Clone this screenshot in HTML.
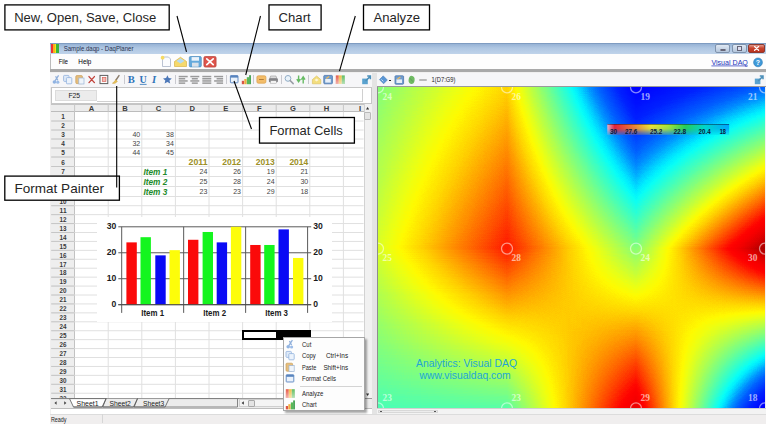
<!DOCTYPE html><html><head><meta charset="utf-8"><title>DaqPlaner</title><style>
html,body{margin:0;padding:0;background:#fff;}
body{width:772px;height:428px;position:relative;overflow:hidden;font-family:"Liberation Sans",sans-serif;color:#222;}
div,svg{position:absolute;box-sizing:border-box;}
svg{left:0;top:0;overflow:visible;}
</style></head><body>
<div style="left:50.30px;top:43.00px;width:715.30px;height:381.00px;background:#f0efef;"></div>
<div style="left:50.30px;top:43.00px;width:715.30px;height:11.40px;background:linear-gradient(#6f8db5 0%,#98b4d6 12%,#aec6e2 45%,#bfd3ea 100%);"></div>
<div style="left:50.80px;top:43.80px;width:8.00px;height:8.80px;background:linear-gradient(90deg,#e33 0 28%,#f3b21a 28% 52%,#f3e51a 52% 66%,#3bb33b 66% 100%);"></div>
<div style="left:714.60px;top:44.20px;width:15.60px;height:8.40px;background:linear-gradient(#dfe8f3,#b4c6dc);border:1px solid #7f93ad;border-radius:2px;"></div>
<div style="left:719.50px;top:48.80px;width:6.00px;height:2.40px;border:1px solid #667;border-radius:1px;background:#eef;"></div>
<div style="left:732.00px;top:44.20px;width:15.40px;height:8.40px;background:linear-gradient(#dfe8f3,#b4c6dc);border:1px solid #7f93ad;border-radius:2px;"></div>
<div style="left:737.00px;top:46.00px;width:5.00px;height:4.50px;border:1px solid #667;background:#dde;"></div>
<div style="left:748.40px;top:44.20px;width:16.80px;height:8.40px;background:linear-gradient(#e29a8c,#c9442e 45%,#b8321e);border:1px solid #8c3a30;border-radius:2px;"></div>
<div style="left:50.30px;top:54.40px;width:715.30px;height:14.80px;background:#fdfdfd;border-left:1px solid #bbb;"></div>
<div style="left:50.30px;top:68.90px;width:715.30px;height:3.30px;background:#a9a9a9;"></div>
<div style="left:50.30px;top:72.60px;width:321.90px;height:14.60px;background:#f6f6f8;"></div>
<div style="left:377.00px;top:72.60px;width:388.60px;height:14.20px;background:#f6f6f8;"></div>
<div style="left:372.20px;top:72.60px;width:4.80px;height:341.00px;background:#e4e4e4;"></div>
<div style="left:123.50px;top:75.00px;width:1.00px;height:9.00px;background:#c9c9cf;"></div>
<div style="left:175.00px;top:75.00px;width:1.00px;height:9.00px;background:#c9c9cf;"></div>
<div style="left:226.00px;top:75.00px;width:1.00px;height:9.00px;background:#c9c9cf;"></div>
<div style="left:253.00px;top:75.00px;width:1.00px;height:9.00px;background:#c9c9cf;"></div>
<div style="left:281.00px;top:75.00px;width:1.00px;height:9.00px;background:#c9c9cf;"></div>
<div style="left:308.20px;top:75.00px;width:1.00px;height:9.00px;background:#c9c9cf;"></div>
<div style="left:389.40px;top:79.80px;width:1.60px;height:1.60px;background:#222;"></div>
<div style="left:419.00px;top:79.20px;width:7.60px;height:2.00px;background:#b9b9b9;border-radius:1px;"></div>
<svg width="772" height="428" viewBox="0 0 772 428"><text x="63.70" y="51.00" font-family="Liberation Sans, sans-serif" font-size="7.3" textLength="69.80" lengthAdjust="spacingAndGlyphs" fill="#2a3350">Sample.daqp - DaqPlaner</text><path d="M754.6 46.6l4 3.6M758.6 46.6l-4 3.6" stroke="#fff" stroke-width="1.3" stroke-linecap="round"/><text x="58.70" y="64.10" font-family="Liberation Sans, sans-serif" font-size="7.3" textLength="9.30" lengthAdjust="spacingAndGlyphs" fill="#000">File</text><text x="78.30" y="64.10" font-family="Liberation Sans, sans-serif" font-size="7.3" textLength="13.10" lengthAdjust="spacingAndGlyphs" fill="#000">Help</text><g transform="translate(160.0 55.5)" opacity=".85"><path d="M2.5 1.5h6l2 2v7.5h-8z" fill="#fbfcff" stroke="#9aa7bd" stroke-width=".8"/><circle cx="2.6" cy="2.2" r="1.9" fill="#f6d648"/><path d="M14.5 6l6-4.2 6 4.2v5h-12z" fill="#f5d352" stroke="#d1a72a" stroke-width=".7"/><path d="M16.5 5.5l4-2.8 4 2.8-4 2.6z" fill="#a9d6f2"/><rect x="29.3" y="1" width="12" height="10.4" rx="1.2" fill="#4a9bd6" stroke="#2f79b4" stroke-width=".7"/><rect x="31.6" y="1.6" width="7.4" height="3.6" fill="#e8f2fb"/><rect x="32" y="7.2" width="6.6" height="4" fill="#d5dde6"/><rect x="43.9" y="1" width="12.2" height="10.6" rx="1.4" fill="#d9372c" stroke="#a8231b" stroke-width=".7"/><path d="M46.8 3.4l6.4 5.8M53.2 3.4l-6.4 5.8" stroke="#fff" stroke-width="1.7" stroke-linecap="round"/></g><text x="711.40" y="64.80" font-family="Liberation Sans, sans-serif" font-size="7.5" textLength="36.50" lengthAdjust="spacingAndGlyphs" fill="#2233bb">Visual DAQ</text><path d="M711.4 65.9H747.9" stroke="#2233bb" stroke-width=".7"/><circle cx="758" cy="62.4" r="4.4" fill="#3f9ad9" stroke="#2a78b5" stroke-width=".6"/><text x="758.00" y="65.00" font-family="Liberation Sans, sans-serif" font-size="7" font-weight="bold" text-anchor="middle" fill="#fff">?</text><defs><linearGradient id="ai" x1="0" y1="0" x2="0" y2="1"><stop offset="0" stop-opacity="0" stop-color="#fff"/><stop offset="1" stop-opacity=".55" stop-color="#fff"/></linearGradient></defs><g transform="translate(51.6 74.6)" opacity=".85"><path d="M7 .8L3.4 6.2M4 1.6l2.2 4" stroke="#7ea3d6" stroke-width="1.3" fill="none"/><circle cx="2.8" cy="7.4" r="1.8" fill="#7fa8de"/><circle cx="6.2" cy="7.6" r="1.6" fill="#8db2e4"/></g><g transform="translate(63.0 74.6)" opacity=".85"><rect x=".6" y=".8" width="5.4" height="6" rx=".8" fill="#dbe8f8" stroke="#7fa5d8" stroke-width=".8"/><rect x="3.4" y="3" width="5.4" height="6.2" rx=".8" fill="#eaf2fc" stroke="#7fa5d8" stroke-width=".8"/></g><g transform="translate(75.2 74.6)" opacity=".85"><rect x=".6" y="1" width="6.6" height="8" rx="1" fill="#e3b468" stroke="#c08e3e" stroke-width=".7"/><rect x="3.6" y="3.4" width="5.2" height="6" fill="#eef4fb" stroke="#8aa9d0" stroke-width=".7"/></g><g transform="translate(87.2 74.6)" opacity=".85"><path d="M1.8 2l5.4 6M7.2 2L1.8 8" stroke="#b9261c" stroke-width="1.4" stroke-linecap="round"/></g><g transform="translate(99.3 74.6)" opacity=".85"><rect x=".7" y=".8" width="7.8" height="8.2" fill="#fff" stroke="#444" stroke-width="1"/><rect x="3" y="3" width="3.6" height="3.8" fill="#f3b0a8" stroke="#d4483c" stroke-width=".7"/></g><g transform="translate(111.4 74.6)" opacity=".85"><path d="M7.6 1L4.6 5.4" stroke="#7a6a56" stroke-width="1.5" stroke-linecap="round"/><path d="M1 8.6c1.5-.4 2.2-2.6 3.4-3.4l1.6 1.4C5.2 8 3.4 9.4 1 8.6z" fill="#e6b93c" stroke="#c0922a" stroke-width=".5"/></g><text x="127.80" y="83.40" font-family="Liberation Serif, serif" font-size="10.6" font-weight="bold" fill="#2f74b8">B</text><text x="139.60" y="83.20" font-family="Liberation Serif, serif" font-size="10" font-weight="bold" fill="#2f74b8">U</text><path d="M139.8 84.4H146.6" stroke="#2f74b8" stroke-width=".8"/><text x="152.00" y="83.40" font-family="Liberation Serif, serif" font-size="10.6" font-weight="bold" font-style="italic" fill="#2f74b8">I</text><g transform="translate(162.4 74.6)" opacity=".85"><path d="M5 .6l1.3 2.9 3.1.3-2.3 2.1.7 3.1L5 7.4 2.2 9l.7-3.1L.6 3.8l3.1-.3z" fill="#2f62ad"/></g><g transform="translate(178.2 74.6)" opacity=".85"><rect x="0.5" y="1.2" width="9.0" height="1.5" fill="#8b8b8b"/><rect x="0.5" y="3.4000000000000004" width="6.5" height="1.5" fill="#8b8b8b"/><rect x="0.5" y="5.6000000000000005" width="9.0" height="1.5" fill="#8b8b8b"/><rect x="0.5" y="7.800000000000001" width="6.5" height="1.5" fill="#8b8b8b"/></g><g transform="translate(189.8 74.6)" opacity=".85"><rect x="0.5" y="1.2" width="9.0" height="1.5" fill="#8b8b8b"/><rect x="2" y="3.4000000000000004" width="6" height="1.5" fill="#8b8b8b"/><rect x="0.5" y="5.6000000000000005" width="9.0" height="1.5" fill="#8b8b8b"/><rect x="2" y="7.800000000000001" width="6" height="1.5" fill="#8b8b8b"/></g><g transform="translate(201.8 74.6)" opacity=".85"><rect x="0.5" y="1.2" width="9.0" height="1.5" fill="#8b8b8b"/><rect x="0.5" y="3.4000000000000004" width="9.0" height="1.5" fill="#8b8b8b"/><rect x="0.5" y="5.6000000000000005" width="9.0" height="1.5" fill="#8b8b8b"/><rect x="0.5" y="7.800000000000001" width="9.0" height="1.5" fill="#8b8b8b"/></g><g transform="translate(213.6 74.6)" opacity=".85"><rect x="0.5" y="1.2" width="9.0" height="1.5" fill="#8b8b8b"/><rect x="3" y="3.4000000000000004" width="6.5" height="1.5" fill="#8b8b8b"/><rect x="0.5" y="5.6000000000000005" width="9.0" height="1.5" fill="#8b8b8b"/><rect x="3" y="7.800000000000001" width="6.5" height="1.5" fill="#8b8b8b"/></g><g transform="translate(229.8 74.6)" opacity=".85"><rect x=".6" y="1" width="7.6" height="7.2" rx=".6" fill="#e9f1fb" stroke="#3c6fb4" stroke-width=".9"/><rect x=".6" y="1" width="7.6" height="2" fill="#3c6fb4"/></g><g transform="translate(241.4 74.6)" opacity=".85"><rect x=".4" y="6.2" width="2.3" height="3.4" fill="#d33a2a"/><rect x="2.9" y="4.4" width="2.3" height="5.2" fill="#f0a020"/><rect x="5.4" y="2.6" width="2.3" height="7" fill="#3cae3c"/><rect x="7.7" y=".6" width="1.9" height="9" fill="#2f9a3f"/></g><g transform="translate(256.4 74.6)" opacity=".85"><rect x=".5" y="1.2" width="9" height="7.4" rx="1.4" fill="#f3b452" stroke="#d68f2a" stroke-width=".7"/><rect x="2.6" y="4.4" width="4.8" height="1" fill="#a86a18"/></g><g transform="translate(268.4 74.6)" opacity=".85"><path d="M2.2 1.4h5.4l.8 2.4H1.4z" fill="#dcdcdc" stroke="#777" stroke-width=".5"/><rect x=".5" y="3.6" width="9" height="4" rx="1" fill="#6f6f74"/><rect x="2.2" y="6.2" width="5.6" height="2.6" fill="#f2f2f2" stroke="#888" stroke-width=".4"/></g><g transform="translate(284.2 74.6)" opacity=".85"><circle cx="3.8" cy="3.8" r="2.9" fill="#e8f3fb" stroke="#7f9fbd" stroke-width="1"/><path d="M6 6l3 3" stroke="#8a8f98" stroke-width="1.5" stroke-linecap="round"/></g><g transform="translate(296.0 74.6)" opacity=".85"><path d="M2.6 1v5.2M.8 4.6l1.8 2.6 1.8-2.6M7.2 9V3.4M5.4 5l1.8-2.8L9 5" stroke="#4db04a" stroke-width="1.4" fill="none"/></g><g transform="translate(311.6 74.6)" opacity=".85"><path d="M.8 5l4.2-3.6L9.2 5v4.2H.8z" fill="#f3da6a" stroke="#d4b23a" stroke-width=".6"/><path d="M3 5.4l2-1.6 2 1.6-2 1.6z" fill="#fff7d0"/></g><g transform="translate(323.2 74.6)" opacity=".85"><rect x=".6" y=".8" width="8.6" height="8.4" rx=".8" fill="#5a8ec8" stroke="#2f5f9e" stroke-width=".8"/><rect x="2" y="4.4" width="5.6" height="3.6" fill="#e6eef8"/><path d="M3 4l3-2" stroke="#f0b040" stroke-width="1.2"/></g><g transform="translate(335.4 74.6)" opacity=".85"><rect x=".4" y=".8" width="3" height="8.6" fill="#e4402c"/><rect x="3.4" y=".8" width="3" height="8.6" fill="#f0b428"/><rect x="6.4" y=".8" width="3" height="8.6" fill="#49b449"/><rect x=".4" y=".8" width="9" height="8.6" fill="url(#ai)"/></g><g transform="translate(361.6 75.0)" opacity=".85"><rect x=".6" y="3.6" width="5.6" height="5.6" fill="#3f94c8"/><path d="M4 6l4.6-4.6M5.6 1h3.2v3.2" stroke="#2f7fb0" stroke-width="1.5" fill="none"/></g><g transform="translate(754.2 75.0)" opacity=".85"><rect x=".6" y="3.6" width="5.6" height="5.6" fill="#3f94c8"/><path d="M4 6l4.6-4.6M5.6 1h3.2v3.2" stroke="#2f7fb0" stroke-width="1.5" fill="none"/></g><g transform="translate(378.8 75.0)" opacity=".85"><path d="M.6 4.6L4.4.8l4.2 4.2-3.8 3.8z" fill="#3f86d0" stroke="#2b66a8" stroke-width=".5"/><path d="M2.6 4.4l2 2" stroke="#cfe3f7" stroke-width=".9"/></g><g transform="translate(394.4 75.0)" opacity=".85"><rect x=".6" y=".8" width="8.6" height="8.4" rx=".8" fill="#5a8ec8" stroke="#2f5f9e" stroke-width=".8"/><rect x="2" y="4.4" width="5.6" height="3.6" fill="#e6eef8"/><path d="M3 4l3-2" stroke="#f0b040" stroke-width="1.2"/></g><g transform="translate(407.4 75.0)" opacity=".85"><path d="M4 .8c2.6 0 3.6 2.2 3.2 4.6C6.9 7.8 5.6 9.2 3.8 9 1.9 8.8.8 7 1.2 4.8 1.6 2.4 2.6.8 4 .8z" fill="#58b04a"/><path d="M2.6 3.2l2.8 3.4" stroke="#3f8a38" stroke-width=".8"/></g><text x="431.60" y="82.40" font-family="Liberation Sans, sans-serif" font-size="6.6" textLength="23.80" lengthAdjust="spacingAndGlyphs" fill="#222">1(D7:G9)</text></svg>
<div style="left:51.20px;top:87.20px;width:321.00px;height:326.40px;background:#fff;"></div>
<div style="left:51.20px;top:87.40px;width:321.00px;height:16.20px;background:#fff;border:1px solid #c6c6c6;"></div>
<div style="left:54.60px;top:89.60px;width:42.00px;height:11.40px;background:#ececec;border:1px solid #dcdcdc;"></div>
<div style="left:97.00px;top:89.00px;width:266.00px;height:12.60px;border-bottom:1px solid #d0d0d0;border-right:1px solid #d0d0d0;"></div>
<div style="left:51.20px;top:103.70px;width:312.40px;height:8.30px;background:#ececec;border-top:1px solid #c4c4c4;border-bottom:1px solid #bcbcbc;"></div>
<div style="left:51.20px;top:112.00px;width:23.40px;height:286.20px;background:#eeeeee;border-right:1px solid #c2c2c2;"></div>
<div style="left:363.60px;top:103.70px;width:8.60px;height:294.50px;background:#f1f1f1;border-left:1px solid #d2d2d2;"></div>
<div style="left:364.40px;top:112.40px;width:7.00px;height:8.00px;background:#e4e4e4;border:1px solid #b9b9b9;border-radius:1px;"></div>
<svg width="772" height="428" viewBox="0 0 772 428"><text x="68.40" y="98.20" font-family="Liberation Sans, sans-serif" font-size="7.5" textLength="11.80" lengthAdjust="spacingAndGlyphs" fill="#222">F25</text><path d="M51.2 121.00H363.6M51.2 130.00H363.6M51.2 139.00H363.6M51.2 148.00H363.6M51.2 157.00H363.6M51.2 166.50H363.6M51.2 176.50H363.6M51.2 186.50H363.6M51.2 196.50H363.6M51.2 205.70H363.6M51.2 214.63H363.6M51.2 223.56H363.6M51.2 232.49H363.6M51.2 241.42H363.6M51.2 250.35H363.6M51.2 259.28H363.6M51.2 268.21H363.6M51.2 277.14H363.6M51.2 286.07H363.6M51.2 295.00H363.6M51.2 303.93H363.6M51.2 312.86H363.6M51.2 321.79H363.6M51.2 330.72H363.6M51.2 339.65H363.6M51.2 348.58H363.6M51.2 357.51H363.6M51.2 366.44H363.6M51.2 375.37H363.6M51.2 384.30H363.6M51.2 393.23H363.6M108.20 112.0V398.2M141.80 112.0V398.2M175.40 112.0V398.2M209.00 112.0V398.2M242.60 112.0V398.2M276.20 112.0V398.2M309.80 112.0V398.2M343.40 112.0V398.2" stroke="#e0e0e0" stroke-width="1" fill="none"/><path d="M74.60 103.7V112.0M108.20 103.7V112.0M141.80 103.7V112.0M175.40 103.7V112.0M209.00 103.7V112.0M242.60 103.7V112.0M276.20 103.7V112.0M309.80 103.7V112.0M343.40 103.7V112.0M51.2 121.00H74.6M51.2 130.00H74.6M51.2 139.00H74.6M51.2 148.00H74.6M51.2 157.00H74.6M51.2 166.50H74.6M51.2 176.50H74.6M51.2 186.50H74.6M51.2 196.50H74.6M51.2 205.70H74.6M51.2 214.63H74.6M51.2 223.56H74.6M51.2 232.49H74.6M51.2 241.42H74.6M51.2 250.35H74.6M51.2 259.28H74.6M51.2 268.21H74.6M51.2 277.14H74.6M51.2 286.07H74.6M51.2 295.00H74.6M51.2 303.93H74.6M51.2 312.86H74.6M51.2 321.79H74.6M51.2 330.72H74.6M51.2 339.65H74.6M51.2 348.58H74.6M51.2 357.51H74.6M51.2 366.44H74.6M51.2 375.37H74.6M51.2 384.30H74.6M51.2 393.23H74.6" stroke="#c6c6c6" stroke-width="1" fill="none"/><text x="91.40" y="110.60" font-family="Liberation Sans, sans-serif" font-size="7.6" font-weight="bold" text-anchor="middle" fill="#3c3c3c">A</text><text x="125.00" y="110.60" font-family="Liberation Sans, sans-serif" font-size="7.6" font-weight="bold" text-anchor="middle" fill="#3c3c3c">B</text><text x="158.60" y="110.60" font-family="Liberation Sans, sans-serif" font-size="7.6" font-weight="bold" text-anchor="middle" fill="#3c3c3c">C</text><text x="192.20" y="110.60" font-family="Liberation Sans, sans-serif" font-size="7.6" font-weight="bold" text-anchor="middle" fill="#3c3c3c">D</text><text x="225.80" y="110.60" font-family="Liberation Sans, sans-serif" font-size="7.6" font-weight="bold" text-anchor="middle" fill="#3c3c3c">E</text><text x="259.40" y="110.60" font-family="Liberation Sans, sans-serif" font-size="7.6" font-weight="bold" text-anchor="middle" fill="#3c3c3c">F</text><text x="293.00" y="110.60" font-family="Liberation Sans, sans-serif" font-size="7.6" font-weight="bold" text-anchor="middle" fill="#3c3c3c">G</text><text x="326.60" y="110.60" font-family="Liberation Sans, sans-serif" font-size="7.6" font-weight="bold" text-anchor="middle" fill="#3c3c3c">H</text><text x="360.00" y="110.60" font-family="Liberation Sans, sans-serif" font-size="7.6" font-weight="bold" text-anchor="middle" fill="#3c3c3c">I</text><text x="61.30" y="119.30" font-family="Liberation Sans, sans-serif" font-size="7.6" font-weight="bold" textLength="3.60" lengthAdjust="spacingAndGlyphs" fill="#3a3a3a">1</text><text x="61.30" y="128.30" font-family="Liberation Sans, sans-serif" font-size="7.6" font-weight="bold" textLength="3.60" lengthAdjust="spacingAndGlyphs" fill="#3a3a3a">2</text><text x="61.30" y="137.30" font-family="Liberation Sans, sans-serif" font-size="7.6" font-weight="bold" textLength="3.60" lengthAdjust="spacingAndGlyphs" fill="#3a3a3a">3</text><text x="61.30" y="146.30" font-family="Liberation Sans, sans-serif" font-size="7.6" font-weight="bold" textLength="3.60" lengthAdjust="spacingAndGlyphs" fill="#3a3a3a">4</text><text x="61.30" y="155.30" font-family="Liberation Sans, sans-serif" font-size="7.6" font-weight="bold" textLength="3.60" lengthAdjust="spacingAndGlyphs" fill="#3a3a3a">5</text><text x="61.30" y="164.55" font-family="Liberation Sans, sans-serif" font-size="7.6" font-weight="bold" textLength="3.60" lengthAdjust="spacingAndGlyphs" fill="#3a3a3a">6</text><text x="61.30" y="174.30" font-family="Liberation Sans, sans-serif" font-size="7.6" font-weight="bold" textLength="3.60" lengthAdjust="spacingAndGlyphs" fill="#3a3a3a">7</text><text x="61.30" y="184.30" font-family="Liberation Sans, sans-serif" font-size="7.6" font-weight="bold" textLength="3.60" lengthAdjust="spacingAndGlyphs" fill="#3a3a3a">8</text><text x="61.30" y="194.30" font-family="Liberation Sans, sans-serif" font-size="7.6" font-weight="bold" textLength="3.60" lengthAdjust="spacingAndGlyphs" fill="#3a3a3a">9</text><text x="59.60" y="203.90" font-family="Liberation Sans, sans-serif" font-size="7.6" font-weight="bold" textLength="7.00" lengthAdjust="spacingAndGlyphs" fill="#3a3a3a">10</text><text x="59.60" y="212.97" font-family="Liberation Sans, sans-serif" font-size="7.6" font-weight="bold" textLength="7.00" lengthAdjust="spacingAndGlyphs" fill="#3a3a3a">11</text><text x="59.60" y="221.90" font-family="Liberation Sans, sans-serif" font-size="7.6" font-weight="bold" textLength="7.00" lengthAdjust="spacingAndGlyphs" fill="#3a3a3a">12</text><text x="59.60" y="230.82" font-family="Liberation Sans, sans-serif" font-size="7.6" font-weight="bold" textLength="7.00" lengthAdjust="spacingAndGlyphs" fill="#3a3a3a">13</text><text x="59.60" y="239.75" font-family="Liberation Sans, sans-serif" font-size="7.6" font-weight="bold" textLength="7.00" lengthAdjust="spacingAndGlyphs" fill="#3a3a3a">14</text><text x="59.60" y="248.69" font-family="Liberation Sans, sans-serif" font-size="7.6" font-weight="bold" textLength="7.00" lengthAdjust="spacingAndGlyphs" fill="#3a3a3a">15</text><text x="59.60" y="257.62" font-family="Liberation Sans, sans-serif" font-size="7.6" font-weight="bold" textLength="7.00" lengthAdjust="spacingAndGlyphs" fill="#3a3a3a">16</text><text x="59.60" y="266.55" font-family="Liberation Sans, sans-serif" font-size="7.6" font-weight="bold" textLength="7.00" lengthAdjust="spacingAndGlyphs" fill="#3a3a3a">17</text><text x="59.60" y="275.47" font-family="Liberation Sans, sans-serif" font-size="7.6" font-weight="bold" textLength="7.00" lengthAdjust="spacingAndGlyphs" fill="#3a3a3a">18</text><text x="59.60" y="284.41" font-family="Liberation Sans, sans-serif" font-size="7.6" font-weight="bold" textLength="7.00" lengthAdjust="spacingAndGlyphs" fill="#3a3a3a">19</text><text x="59.60" y="293.33" font-family="Liberation Sans, sans-serif" font-size="7.6" font-weight="bold" textLength="7.00" lengthAdjust="spacingAndGlyphs" fill="#3a3a3a">20</text><text x="59.60" y="302.26" font-family="Liberation Sans, sans-serif" font-size="7.6" font-weight="bold" textLength="7.00" lengthAdjust="spacingAndGlyphs" fill="#3a3a3a">21</text><text x="59.60" y="311.19" font-family="Liberation Sans, sans-serif" font-size="7.6" font-weight="bold" textLength="7.00" lengthAdjust="spacingAndGlyphs" fill="#3a3a3a">22</text><text x="59.60" y="320.12" font-family="Liberation Sans, sans-serif" font-size="7.6" font-weight="bold" textLength="7.00" lengthAdjust="spacingAndGlyphs" fill="#3a3a3a">23</text><text x="59.60" y="329.06" font-family="Liberation Sans, sans-serif" font-size="7.6" font-weight="bold" textLength="7.00" lengthAdjust="spacingAndGlyphs" fill="#3a3a3a">24</text><text x="59.60" y="337.98" font-family="Liberation Sans, sans-serif" font-size="7.6" font-weight="bold" textLength="7.00" lengthAdjust="spacingAndGlyphs" fill="#3a3a3a">25</text><text x="59.60" y="346.92" font-family="Liberation Sans, sans-serif" font-size="7.6" font-weight="bold" textLength="7.00" lengthAdjust="spacingAndGlyphs" fill="#3a3a3a">26</text><text x="59.60" y="355.84" font-family="Liberation Sans, sans-serif" font-size="7.6" font-weight="bold" textLength="7.00" lengthAdjust="spacingAndGlyphs" fill="#3a3a3a">27</text><text x="59.60" y="364.78" font-family="Liberation Sans, sans-serif" font-size="7.6" font-weight="bold" textLength="7.00" lengthAdjust="spacingAndGlyphs" fill="#3a3a3a">28</text><text x="59.60" y="373.70" font-family="Liberation Sans, sans-serif" font-size="7.6" font-weight="bold" textLength="7.00" lengthAdjust="spacingAndGlyphs" fill="#3a3a3a">29</text><text x="59.60" y="382.63" font-family="Liberation Sans, sans-serif" font-size="7.6" font-weight="bold" textLength="7.00" lengthAdjust="spacingAndGlyphs" fill="#3a3a3a">30</text><text x="59.60" y="391.56" font-family="Liberation Sans, sans-serif" font-size="7.6" font-weight="bold" textLength="7.00" lengthAdjust="spacingAndGlyphs" fill="#3a3a3a">31</text><text x="59.60" y="400.50" font-family="Liberation Sans, sans-serif" font-size="7.6" font-weight="bold" textLength="7.00" lengthAdjust="spacingAndGlyphs" fill="#3a3a3a">32</text><text x="132.40" y="137.30" font-family="Liberation Sans, sans-serif" font-size="7.7" textLength="7.80" lengthAdjust="spacingAndGlyphs" fill="#454545">40</text><text x="166.00" y="137.30" font-family="Liberation Sans, sans-serif" font-size="7.7" textLength="7.80" lengthAdjust="spacingAndGlyphs" fill="#454545">38</text><text x="132.40" y="146.30" font-family="Liberation Sans, sans-serif" font-size="7.7" textLength="7.80" lengthAdjust="spacingAndGlyphs" fill="#454545">32</text><text x="166.00" y="146.30" font-family="Liberation Sans, sans-serif" font-size="7.7" textLength="7.80" lengthAdjust="spacingAndGlyphs" fill="#454545">34</text><text x="132.40" y="155.30" font-family="Liberation Sans, sans-serif" font-size="7.7" textLength="7.80" lengthAdjust="spacingAndGlyphs" fill="#454545">44</text><text x="166.00" y="155.30" font-family="Liberation Sans, sans-serif" font-size="7.7" textLength="7.80" lengthAdjust="spacingAndGlyphs" fill="#454545">45</text><text x="188.60" y="164.95" font-family="Liberation Sans, sans-serif" font-size="9" font-weight="bold" textLength="18.90" lengthAdjust="spacingAndGlyphs" fill="#9c8f26">2011</text><text x="222.20" y="164.95" font-family="Liberation Sans, sans-serif" font-size="9" font-weight="bold" textLength="18.90" lengthAdjust="spacingAndGlyphs" fill="#9c8f26">2012</text><text x="255.80" y="164.95" font-family="Liberation Sans, sans-serif" font-size="9" font-weight="bold" textLength="18.90" lengthAdjust="spacingAndGlyphs" fill="#9c8f26">2013</text><text x="289.40" y="164.95" font-family="Liberation Sans, sans-serif" font-size="9" font-weight="bold" textLength="18.90" lengthAdjust="spacingAndGlyphs" fill="#9c8f26">2014</text><text x="143.50" y="174.50" font-family="Liberation Sans, sans-serif" font-size="8.4" font-weight="bold" font-style="italic" textLength="23.80" lengthAdjust="spacingAndGlyphs" fill="#1d8a2a">Item 1</text><text x="199.60" y="174.30" font-family="Liberation Sans, sans-serif" font-size="7.7" textLength="7.80" lengthAdjust="spacingAndGlyphs" fill="#454545">24</text><text x="233.20" y="174.30" font-family="Liberation Sans, sans-serif" font-size="7.7" textLength="7.80" lengthAdjust="spacingAndGlyphs" fill="#454545">26</text><text x="266.80" y="174.30" font-family="Liberation Sans, sans-serif" font-size="7.7" textLength="7.80" lengthAdjust="spacingAndGlyphs" fill="#454545">19</text><text x="300.40" y="174.30" font-family="Liberation Sans, sans-serif" font-size="7.7" textLength="7.80" lengthAdjust="spacingAndGlyphs" fill="#454545">21</text><text x="143.50" y="184.50" font-family="Liberation Sans, sans-serif" font-size="8.4" font-weight="bold" font-style="italic" textLength="23.80" lengthAdjust="spacingAndGlyphs" fill="#1d8a2a">Item 2</text><text x="199.60" y="184.30" font-family="Liberation Sans, sans-serif" font-size="7.7" textLength="7.80" lengthAdjust="spacingAndGlyphs" fill="#454545">25</text><text x="233.20" y="184.30" font-family="Liberation Sans, sans-serif" font-size="7.7" textLength="7.80" lengthAdjust="spacingAndGlyphs" fill="#454545">28</text><text x="266.80" y="184.30" font-family="Liberation Sans, sans-serif" font-size="7.7" textLength="7.80" lengthAdjust="spacingAndGlyphs" fill="#454545">24</text><text x="300.40" y="184.30" font-family="Liberation Sans, sans-serif" font-size="7.7" textLength="7.80" lengthAdjust="spacingAndGlyphs" fill="#454545">30</text><text x="143.50" y="194.50" font-family="Liberation Sans, sans-serif" font-size="8.4" font-weight="bold" font-style="italic" textLength="23.80" lengthAdjust="spacingAndGlyphs" fill="#1d8a2a">Item 3</text><text x="199.60" y="194.30" font-family="Liberation Sans, sans-serif" font-size="7.7" textLength="7.80" lengthAdjust="spacingAndGlyphs" fill="#454545">23</text><text x="233.20" y="194.30" font-family="Liberation Sans, sans-serif" font-size="7.7" textLength="7.80" lengthAdjust="spacingAndGlyphs" fill="#454545">23</text><text x="266.80" y="194.30" font-family="Liberation Sans, sans-serif" font-size="7.7" textLength="7.80" lengthAdjust="spacingAndGlyphs" fill="#454545">29</text><text x="300.40" y="194.30" font-family="Liberation Sans, sans-serif" font-size="7.7" textLength="7.80" lengthAdjust="spacingAndGlyphs" fill="#454545">18</text><path d="M366 109.4l1.6-2.4 1.6 2.4zM366 393.6l1.6 2.4 1.6-2.4z" fill="#333"/></svg>
<div style="left:96.80px;top:217.00px;width:235.40px;height:105.00px;background:#fff;"></div>
<svg width="772" height="428" viewBox="0 0 772 428"><path d="M118.3 226.80H311.20000000000005" stroke="#5a5a5a" stroke-width="1"/><path d="M118.3 252.77H311.20000000000005" stroke="#5a5a5a" stroke-width="1"/><path d="M118.3 278.73H311.20000000000005" stroke="#5a5a5a" stroke-width="1"/><path d="M118.3 304.70H311.20000000000005" stroke="#5a5a5a" stroke-width="1"/><path d="M121.70 226.8V312.9" stroke="#5a5a5a" stroke-width="1"/><path d="M183.67 226.8V312.9" stroke="#5a5a5a" stroke-width="1"/><path d="M245.63 226.8V312.9" stroke="#5a5a5a" stroke-width="1"/><path d="M307.60 226.8V312.9" stroke="#5a5a5a" stroke-width="1"/><rect x="126.40" y="242.38" width="10.4" height="62.32" fill="#fb0a0a"/><rect x="140.50" y="237.19" width="10.4" height="67.51" fill="#14f51e"/><rect x="155.30" y="255.36" width="10.4" height="49.34" fill="#0a0af5"/><rect x="169.50" y="250.17" width="10.4" height="54.53" fill="#fdfd0a"/><rect x="188.00" y="239.78" width="10.4" height="64.92" fill="#fb0a0a"/><rect x="202.60" y="231.99" width="10.4" height="72.71" fill="#14f51e"/><rect x="216.70" y="242.38" width="10.4" height="62.32" fill="#0a0af5"/><rect x="230.90" y="226.80" width="10.4" height="77.90" fill="#fdfd0a"/><rect x="250.20" y="244.98" width="10.4" height="59.72" fill="#fb0a0a"/><rect x="264.20" y="244.98" width="10.4" height="59.72" fill="#14f51e"/><rect x="278.50" y="229.40" width="10.4" height="75.30" fill="#0a0af5"/><rect x="293.00" y="257.96" width="10.4" height="46.74" fill="#fdfd0a"/><path d="M118.3 304.7H311.20000000000005" stroke="#4a4a4a" stroke-width="1"/><text x="116.20" y="229.40" font-family="Liberation Sans, sans-serif" font-size="8.6" font-weight="bold" text-anchor="end" fill="#1a1a1a">30</text><text x="313.20" y="229.40" font-family="Liberation Sans, sans-serif" font-size="8.6" font-weight="bold" fill="#1a1a1a">30</text><text x="116.20" y="255.37" font-family="Liberation Sans, sans-serif" font-size="8.6" font-weight="bold" text-anchor="end" fill="#1a1a1a">20</text><text x="313.20" y="255.37" font-family="Liberation Sans, sans-serif" font-size="8.6" font-weight="bold" fill="#1a1a1a">20</text><text x="116.20" y="281.33" font-family="Liberation Sans, sans-serif" font-size="8.6" font-weight="bold" text-anchor="end" fill="#1a1a1a">10</text><text x="313.20" y="281.33" font-family="Liberation Sans, sans-serif" font-size="8.6" font-weight="bold" fill="#1a1a1a">10</text><text x="116.20" y="307.30" font-family="Liberation Sans, sans-serif" font-size="8.6" font-weight="bold" text-anchor="end" fill="#1a1a1a">0</text><text x="313.20" y="307.30" font-family="Liberation Sans, sans-serif" font-size="8.6" font-weight="bold" fill="#1a1a1a">0</text><text x="141.28" y="316.30" font-family="Liberation Sans, sans-serif" font-size="8.4" font-weight="bold" textLength="22.80" lengthAdjust="spacingAndGlyphs" fill="#1a1a1a">Item 1</text><text x="203.25" y="316.30" font-family="Liberation Sans, sans-serif" font-size="8.4" font-weight="bold" textLength="22.80" lengthAdjust="spacingAndGlyphs" fill="#1a1a1a">Item 2</text><text x="265.22" y="316.30" font-family="Liberation Sans, sans-serif" font-size="8.4" font-weight="bold" textLength="22.80" lengthAdjust="spacingAndGlyphs" fill="#1a1a1a">Item 3</text></svg>
<div style="left:241.60px;top:329.80px;width:69.00px;height:10.20px;border:2px solid #000;background:#fff;"></div>
<div style="left:275.90px;top:330.10px;width:34.40px;height:9.70px;background:#000;"></div>
<div style="left:51.20px;top:398.20px;width:321.00px;height:9.60px;background:#ececec;border-top:1px solid #9a9a9a;"></div>
<div style="left:239.00px;top:398.80px;width:124.60px;height:8.60px;background:#f4f4f4;border:1px solid #cfcfcf;"></div>
<div style="left:247.60px;top:399.60px;width:7.60px;height:7.00px;background:#e4e4e4;border:1px solid #a9a9a9;border-radius:1px;"></div>
<div style="left:51.20px;top:407.80px;width:321.00px;height:1.60px;background:#bdbdbd;"></div>
<svg width="772" height="428" viewBox="0 0 772 428"><path d="M56.6 401.2l-2.2 1.8 2.2 1.8zM64.2 401.2l2.2 1.8-2.2 1.8z" fill="#444"/><path d="M69.5 398.6l4 8.4h28.6l4-8.4z" fill="#fff" stroke="#555" stroke-width=".8"/><path d="M106.1 398.6l-3.4 8.4h30.8l4-8.4M137.5 398.6l-3.4 8.4h31l4-8.4" fill="none" stroke="#555" stroke-width=".8"/><path d="M69.5 398.6H51.2M169 398.6H239" stroke="#777" stroke-width=".8"/><path d="M73.5 407H237.5V399" fill="none" stroke="#6a6a6a" stroke-width=".8"/><text x="76.60" y="405.80" font-family="Liberation Sans, sans-serif" font-size="7.5" textLength="21.90" lengthAdjust="spacingAndGlyphs" fill="#222">Sheet1</text><text x="109.40" y="405.80" font-family="Liberation Sans, sans-serif" font-size="7.5" textLength="21.50" lengthAdjust="spacingAndGlyphs" fill="#222">Sheet2</text><text x="143.00" y="405.80" font-family="Liberation Sans, sans-serif" font-size="7.5" textLength="21.20" lengthAdjust="spacingAndGlyphs" fill="#222">Sheet3</text><path d="M243.8 401.2l-2.2 1.8 2.2 1.8z" fill="#333"/></svg>
<svg style="left:378.00px;top:87.00px;overflow:hidden" width="387.00" height="322.00" viewBox="0 0 387.00 322.00"><defs><linearGradient id="r0" gradientUnits="userSpaceOnUse" x1="0" y1="0" x2="387.00" y2="0"><stop offset="0.00000" stop-color="rgb(127.5,127.5,127.5)"/><stop offset="0.33333" stop-color="rgb(170.0,170.0,170.0)"/><stop offset="0.66667" stop-color="rgb(21.2,21.2,21.2)"/><stop offset="1.00000" stop-color="rgb(63.8,63.8,63.8)"/></linearGradient><linearGradient id="r1" gradientUnits="userSpaceOnUse" x1="0" y1="0" x2="387.00" y2="0"><stop offset="0.00000" stop-color="rgb(148.8,148.8,148.8)"/><stop offset="0.33333" stop-color="rgb(212.5,212.5,212.5)"/><stop offset="0.66667" stop-color="rgb(127.5,127.5,127.5)"/><stop offset="1.00000" stop-color="rgb(255.0,255.0,255.0)"/></linearGradient><linearGradient id="r2" gradientUnits="userSpaceOnUse" x1="0" y1="0" x2="387.00" y2="0"><stop offset="0.00000" stop-color="rgb(110.5,110.5,110.5)"/><stop offset="0.33333" stop-color="rgb(110.5,110.5,110.5)"/><stop offset="0.66667" stop-color="rgb(238.0,238.0,238.0)"/><stop offset="1.00000" stop-color="rgb(4.2,4.2,4.2)"/></linearGradient><linearGradient id="v0" gradientUnits="userSpaceOnUse" x1="0" y1="0.00" x2="0" y2="161.40"><stop offset="0" stop-color="#fff" stop-opacity="0"/><stop offset="1" stop-color="#fff" stop-opacity="1"/></linearGradient><mask id="m0" maskUnits="userSpaceOnUse" x="0" y="-2.00" width="387.00" height="165.40"><rect x="0" y="-2.00" width="387.00" height="165.40" fill="url(#v0)"/></mask><linearGradient id="v1" gradientUnits="userSpaceOnUse" x1="0" y1="161.40" x2="0" y2="328.20"><stop offset="0" stop-color="#fff" stop-opacity="0"/><stop offset="1" stop-color="#fff" stop-opacity="1"/></linearGradient><mask id="m1" maskUnits="userSpaceOnUse" x="0" y="159.40" width="387.00" height="170.80"><rect x="0" y="159.40" width="387.00" height="170.80" fill="url(#v1)"/></mask><filter id="jet" filterUnits="userSpaceOnUse" x="0" y="0" width="387.00" height="322.00" color-interpolation-filters="sRGB"><feComponentTransfer><feFuncR type="table" tableValues="0 0 0 0 0 0 0 0 0 0 0 0 0 0 0 0 0 0 0.033 0.115 0.197 0.279 0.361 0.443 0.525 0.607 0.689 0.77 0.852 0.934 1 1 1 1 1 1 1 1 1 1 1 1 0.985 0.951 0.905 0.85 0.786 0.716 0.64"/><feFuncG type="table" tableValues="0 0 0 0 0 0.033 0.065 0.098 0.13 0.193 0.255 0.318 0.38 0.475 0.57 0.695 0.82 0.933 1 1 1 1 1 1 1 1 1 1 1 1 0.985 0.907 0.83 0.74 0.65 0.56 0.47 0.377 0.285 0.193 0.1 0.017 0 0 0 0 0 0 0"/><feFuncB type="table" tableValues="0.74 0.805 0.87 0.935 1 1 1 1 1 1 1 1 1 1 1 1 1 1 0.967 0.885 0.803 0.721 0.639 0.557 0.475 0.393 0.311 0.23 0.148 0.066 0 0 0 0 0 0 0 0 0 0 0 0 0 0 0 0 0 0 0"/></feComponentTransfer></filter><linearGradient id="lg" x1="0" y1="0" x2="1" y2="0"><stop offset="0" stop-color="#f0b4c8"/><stop offset=".06" stop-color="#f01e32"/><stop offset=".2" stop-color="#f57828"/><stop offset=".36" stop-color="#f5eb2d"/><stop offset=".5" stop-color="#aaeb32"/><stop offset=".64" stop-color="#28d250"/><stop offset=".8" stop-color="#00d7c8"/><stop offset="1" stop-color="#00a0ff"/></linearGradient><linearGradient id="lgv" x1="0" y1="0" x2="0" y2="1"><stop offset="0" stop-color="#013" stop-opacity=".55"/><stop offset=".08" stop-color="#013" stop-opacity=".4"/><stop offset=".13" stop-color="#000" stop-opacity="0"/><stop offset="1" stop-color="#fff" stop-opacity="0"/></linearGradient><linearGradient id="lga" x1="0" y1="0" x2="0" y2="1"><stop offset="0" stop-color="#fff" stop-opacity="1"/><stop offset=".4" stop-color="#fff" stop-opacity=".9"/><stop offset="1" stop-color="#fff" stop-opacity=".08"/></linearGradient><mask id="lm" maskUnits="userSpaceOnUse" x="228" y="37" width="126" height="12"><rect x="228" y="37" width="126" height="12" fill="url(#lga)"/></mask></defs><g filter="url(#jet)" shape-rendering="crispEdges"><rect x="0" y="0" width="387.00" height="162" fill="url(#r0)"/><rect x="0" y="0" width="387.00" height="162" fill="url(#r1)" mask="url(#m0)"/><rect x="0" y="162" width="387.00" height="160.00" fill="url(#r1)"/><rect x="0" y="162" width="387.00" height="160.00" fill="url(#r2)" mask="url(#m1)"/></g><g mask="url(#lm)"><rect x="229.30" y="37.00" width="121.80" height="11.00" fill="url(#lg)"/></g><rect x="229.30" y="37.00" width="121.80" height="11.00" fill="url(#lgv)"/><text x="232.00" y="46.70" textLength="7.20" lengthAdjust="spacingAndGlyphs" font-family="Liberation Sans, sans-serif" font-size="6.3" font-weight="bold" fill="#0a1a3a">30</text><text x="247.00" y="46.70" textLength="12.20" lengthAdjust="spacingAndGlyphs" font-family="Liberation Sans, sans-serif" font-size="6.3" font-weight="bold" fill="#0a1a3a">27.6</text><text x="271.90" y="46.70" textLength="12.30" lengthAdjust="spacingAndGlyphs" font-family="Liberation Sans, sans-serif" font-size="6.3" font-weight="bold" fill="#0a1a3a">25.2</text><text x="295.40" y="46.70" textLength="12.70" lengthAdjust="spacingAndGlyphs" font-family="Liberation Sans, sans-serif" font-size="6.3" font-weight="bold" fill="#0a1a3a">22.8</text><text x="320.50" y="46.70" textLength="12.10" lengthAdjust="spacingAndGlyphs" font-family="Liberation Sans, sans-serif" font-size="6.3" font-weight="bold" fill="#0a1a3a">20.4</text><text x="341.70" y="46.70" textLength="6.30" lengthAdjust="spacingAndGlyphs" font-family="Liberation Sans, sans-serif" font-size="6.3" font-weight="bold" fill="#0a1a3a">18</text><circle cx="0.00" cy="0.30" r="5.5" fill="none" stroke="#fff" stroke-opacity=".52" stroke-width="1.25"/><text x="4.60" y="12.80" textLength="9.4" lengthAdjust="spacingAndGlyphs" font-family="Liberation Serif, serif" font-size="10" font-weight="bold" fill="#fff" fill-opacity=".62">24</text><circle cx="129.00" cy="0.30" r="5.5" fill="none" stroke="#fff" stroke-opacity=".52" stroke-width="1.25"/><text x="133.60" y="12.80" textLength="9.4" lengthAdjust="spacingAndGlyphs" font-family="Liberation Serif, serif" font-size="10" font-weight="bold" fill="#fff" fill-opacity=".62">26</text><circle cx="258.00" cy="0.30" r="5.5" fill="none" stroke="#fff" stroke-opacity=".52" stroke-width="1.25"/><text x="262.60" y="12.80" textLength="9.4" lengthAdjust="spacingAndGlyphs" font-family="Liberation Serif, serif" font-size="10" font-weight="bold" fill="#fff" fill-opacity=".62">19</text><circle cx="387.00" cy="0.30" r="5.5" fill="none" stroke="#fff" stroke-opacity=".52" stroke-width="1.25"/><text x="370.00" y="12.80" textLength="9.4" lengthAdjust="spacingAndGlyphs" font-family="Liberation Serif, serif" font-size="10" font-weight="bold" fill="#fff" fill-opacity=".62">21</text><circle cx="0.00" cy="161.60" r="5.5" fill="none" stroke="#fff" stroke-opacity=".52" stroke-width="1.25"/><text x="4.60" y="174.10" textLength="9.4" lengthAdjust="spacingAndGlyphs" font-family="Liberation Serif, serif" font-size="10" font-weight="bold" fill="#fff" fill-opacity=".62">25</text><circle cx="129.00" cy="161.60" r="5.5" fill="none" stroke="#fff" stroke-opacity=".52" stroke-width="1.25"/><text x="133.60" y="174.10" textLength="9.4" lengthAdjust="spacingAndGlyphs" font-family="Liberation Serif, serif" font-size="10" font-weight="bold" fill="#fff" fill-opacity=".62">28</text><circle cx="258.00" cy="161.60" r="5.5" fill="none" stroke="#fff" stroke-opacity=".52" stroke-width="1.25"/><text x="262.60" y="174.10" textLength="9.4" lengthAdjust="spacingAndGlyphs" font-family="Liberation Serif, serif" font-size="10" font-weight="bold" fill="#fff" fill-opacity=".62">24</text><circle cx="387.00" cy="161.60" r="5.5" fill="none" stroke="#fff" stroke-opacity=".52" stroke-width="1.25"/><text x="370.00" y="174.10" textLength="9.4" lengthAdjust="spacingAndGlyphs" font-family="Liberation Serif, serif" font-size="10" font-weight="bold" fill="#fff" fill-opacity=".62">30</text><circle cx="0.00" cy="321.40" r="5.5" fill="none" stroke="#fff" stroke-opacity=".52" stroke-width="1.25"/><text x="4.60" y="314.00" textLength="9.4" lengthAdjust="spacingAndGlyphs" font-family="Liberation Serif, serif" font-size="10" font-weight="bold" fill="#fff" fill-opacity=".62">23</text><circle cx="129.00" cy="321.40" r="5.5" fill="none" stroke="#fff" stroke-opacity=".52" stroke-width="1.25"/><text x="133.60" y="314.00" textLength="9.4" lengthAdjust="spacingAndGlyphs" font-family="Liberation Serif, serif" font-size="10" font-weight="bold" fill="#fff" fill-opacity=".62">23</text><circle cx="258.00" cy="321.40" r="5.5" fill="none" stroke="#fff" stroke-opacity=".52" stroke-width="1.25"/><text x="262.60" y="314.00" textLength="9.4" lengthAdjust="spacingAndGlyphs" font-family="Liberation Serif, serif" font-size="10" font-weight="bold" fill="#fff" fill-opacity=".62">29</text><circle cx="387.00" cy="321.40" r="5.5" fill="none" stroke="#fff" stroke-opacity=".52" stroke-width="1.25"/><text x="370.00" y="314.00" textLength="9.4" lengthAdjust="spacingAndGlyphs" font-family="Liberation Serif, serif" font-size="10" font-weight="bold" fill="#fff" fill-opacity=".62">18</text><text x="38.00" y="280.00" textLength="101" lengthAdjust="spacingAndGlyphs" font-family="Liberation Sans, sans-serif" font-size="10.7" fill="#1ea6d4">Analytics: Visual DAQ</text><text x="41.50" y="292.40" textLength="91.2" lengthAdjust="spacingAndGlyphs" font-family="Liberation Sans, sans-serif" font-size="10.7" fill="#1ea6d4">www.visualdaq.com</text></svg>
<div style="left:376.80px;top:86.60px;width:1.00px;height:322.40px;background:#8e8e8e;"></div>
<div style="left:376.80px;top:86.20px;width:389.00px;height:1.00px;background:#9a9a9a;"></div>
<div style="left:377.00px;top:408.40px;width:388.60px;height:5.20px;background:#f3f3f3;border-top:1px solid #d0d0d0;"></div>
<div style="left:378.00px;top:409.80px;width:60.00px;height:3.00px;background:#ededed;border:1px solid #d8d8d8;"></div>
<div style="left:380.40px;top:410.50px;width:1.50px;height:1.50px;background:#555;"></div>
<div style="left:434.40px;top:410.50px;width:1.50px;height:1.50px;background:#555;"></div>
<div style="left:50.30px;top:413.60px;width:715.30px;height:10.20px;background:#f0eeee;border-top:1px solid #dcdcdc;"></div>
<div style="left:102.00px;top:414.40px;width:1.00px;height:9.00px;background:#d6d6d6;"></div>
<svg width="772" height="428" viewBox="0 0 772 428"><text x="50.90" y="421.80" font-family="Liberation Sans, sans-serif" font-size="7.2" textLength="15.60" lengthAdjust="spacingAndGlyphs" fill="#222">Ready</text></svg>
<div style="left:283.00px;top:337.20px;width:82.00px;height:73.70px;background:#fdfdfd;border:1px solid #a6a6a6;box-shadow:1.5px 1.5px 2px rgba(0,0,0,.35);"></div>
<div style="left:300.00px;top:386.00px;width:62.00px;height:1.00px;background:#d4d4d4;"></div>
<svg width="772" height="428" viewBox="0 0 772 428"><text x="302.00" y="346.60" font-family="Liberation Sans, sans-serif" font-size="7.2" textLength="9.30" lengthAdjust="spacingAndGlyphs" fill="#222">Cut</text><text x="302.00" y="357.90" font-family="Liberation Sans, sans-serif" font-size="7.2" textLength="13.80" lengthAdjust="spacingAndGlyphs" fill="#222">Copy</text><text x="325.90" y="357.90" font-family="Liberation Sans, sans-serif" font-size="7.2" textLength="22.20" lengthAdjust="spacingAndGlyphs" fill="#222">Ctrl+Ins</text><text x="302.00" y="369.60" font-family="Liberation Sans, sans-serif" font-size="7.2" textLength="14.30" lengthAdjust="spacingAndGlyphs" fill="#222">Paste</text><text x="323.40" y="369.60" font-family="Liberation Sans, sans-serif" font-size="7.2" textLength="24.70" lengthAdjust="spacingAndGlyphs" fill="#222">Shift+Ins</text><text x="302.00" y="381.10" font-family="Liberation Sans, sans-serif" font-size="7.2" textLength="34.00" lengthAdjust="spacingAndGlyphs" fill="#222">Format Cells</text><text x="302.00" y="395.80" font-family="Liberation Sans, sans-serif" font-size="7.2" textLength="21.40" lengthAdjust="spacingAndGlyphs" fill="#222">Analyze</text><text x="302.00" y="407.10" font-family="Liberation Sans, sans-serif" font-size="7.2" textLength="14.60" lengthAdjust="spacingAndGlyphs" fill="#222">Chart</text><g transform="translate(285.4 339.4)" opacity=".85"><path d="M7 .8L3.4 6.2M4 1.6l2.2 4" stroke="#7ea3d6" stroke-width="1.3" fill="none"/><circle cx="2.8" cy="7.4" r="1.8" fill="#7fa8de"/><circle cx="6.2" cy="7.6" r="1.6" fill="#8db2e4"/></g><g transform="translate(285.4 350.6)" opacity=".85"><rect x=".6" y=".8" width="5.4" height="6" rx=".8" fill="#dbe8f8" stroke="#7fa5d8" stroke-width=".8"/><rect x="3.4" y="3" width="5.4" height="6.2" rx=".8" fill="#eaf2fc" stroke="#7fa5d8" stroke-width=".8"/></g><g transform="translate(285.4 362.2)" opacity=".85"><rect x=".6" y="1" width="6.6" height="8" rx="1" fill="#e3b468" stroke="#c08e3e" stroke-width=".7"/><rect x="3.6" y="3.4" width="5.2" height="6" fill="#eef4fb" stroke="#8aa9d0" stroke-width=".7"/></g><g transform="translate(285.6 373.8)" opacity=".85"><rect x=".6" y="1" width="7.6" height="7.2" rx=".6" fill="#e9f1fb" stroke="#3c6fb4" stroke-width=".9"/><rect x=".6" y="1" width="7.6" height="2" fill="#3c6fb4"/></g><g transform="translate(285.4 388.4)" opacity=".85"><rect x=".4" y=".8" width="3" height="8.6" fill="#e4402c"/><rect x="3.4" y=".8" width="3" height="8.6" fill="#f0b428"/><rect x="6.4" y=".8" width="3" height="8.6" fill="#49b449"/><rect x=".4" y=".8" width="9" height="8.6" fill="url(#ai)"/></g><g transform="translate(285.4 399.8)" opacity=".85"><rect x=".4" y="6.2" width="2.3" height="3.4" fill="#d33a2a"/><rect x="2.9" y="4.4" width="2.3" height="5.2" fill="#f0a020"/><rect x="5.4" y="2.6" width="2.3" height="7" fill="#3cae3c"/><rect x="7.7" y=".6" width="1.9" height="9" fill="#2f9a3f"/></g></svg>
<svg width="772" height="428" viewBox="0 0 772 428"><rect x="4.90" y="4.90" width="164.30" height="25.00" fill="#fff" stroke="#000" stroke-width="1.3"/><text x="14.20" y="22.00" font-family="Liberation Sans, sans-serif" font-size="13.2" textLength="142.00" lengthAdjust="spacingAndGlyphs" fill="#262626">New, Open, Save, Close</text><rect x="269.00" y="4.90" width="52.10" height="25.00" fill="#fff" stroke="#000" stroke-width="1.3"/><text x="278.60" y="22.00" font-family="Liberation Sans, sans-serif" font-size="13.2" textLength="32.10" lengthAdjust="spacingAndGlyphs" fill="#262626">Chart</text><rect x="363.50" y="4.90" width="66.00" height="25.00" fill="#fff" stroke="#000" stroke-width="1.3"/><text x="373.40" y="22.00" font-family="Liberation Sans, sans-serif" font-size="13.2" textLength="46.60" lengthAdjust="spacingAndGlyphs" fill="#262626">Analyze</text><rect x="259.50" y="117.50" width="94.90" height="25.60" fill="#fff" stroke="#000" stroke-width="1.3"/><text x="269.40" y="135.00" font-family="Liberation Sans, sans-serif" font-size="13.2" textLength="73.40" lengthAdjust="spacingAndGlyphs" fill="#262626">Format Cells</text><rect x="4.80" y="176.10" width="114.60" height="24.10" fill="#fff" stroke="#000" stroke-width="1.3"/><text x="14.50" y="192.70" font-family="Liberation Sans, sans-serif" font-size="13.2" textLength="89.50" lengthAdjust="spacingAndGlyphs" fill="#262626">Format Painter</text><g stroke="#000" stroke-width="1.1" fill="none"><path d="M177 16L186.5 51.8"/><path d="M260.5 16L245.7 75"/><path d="M355.3 16L339.5 71.2"/><path d="M234 81L251.5 129"/><path d="M116.7 86V187.6"/></g></svg>
</body></html>
